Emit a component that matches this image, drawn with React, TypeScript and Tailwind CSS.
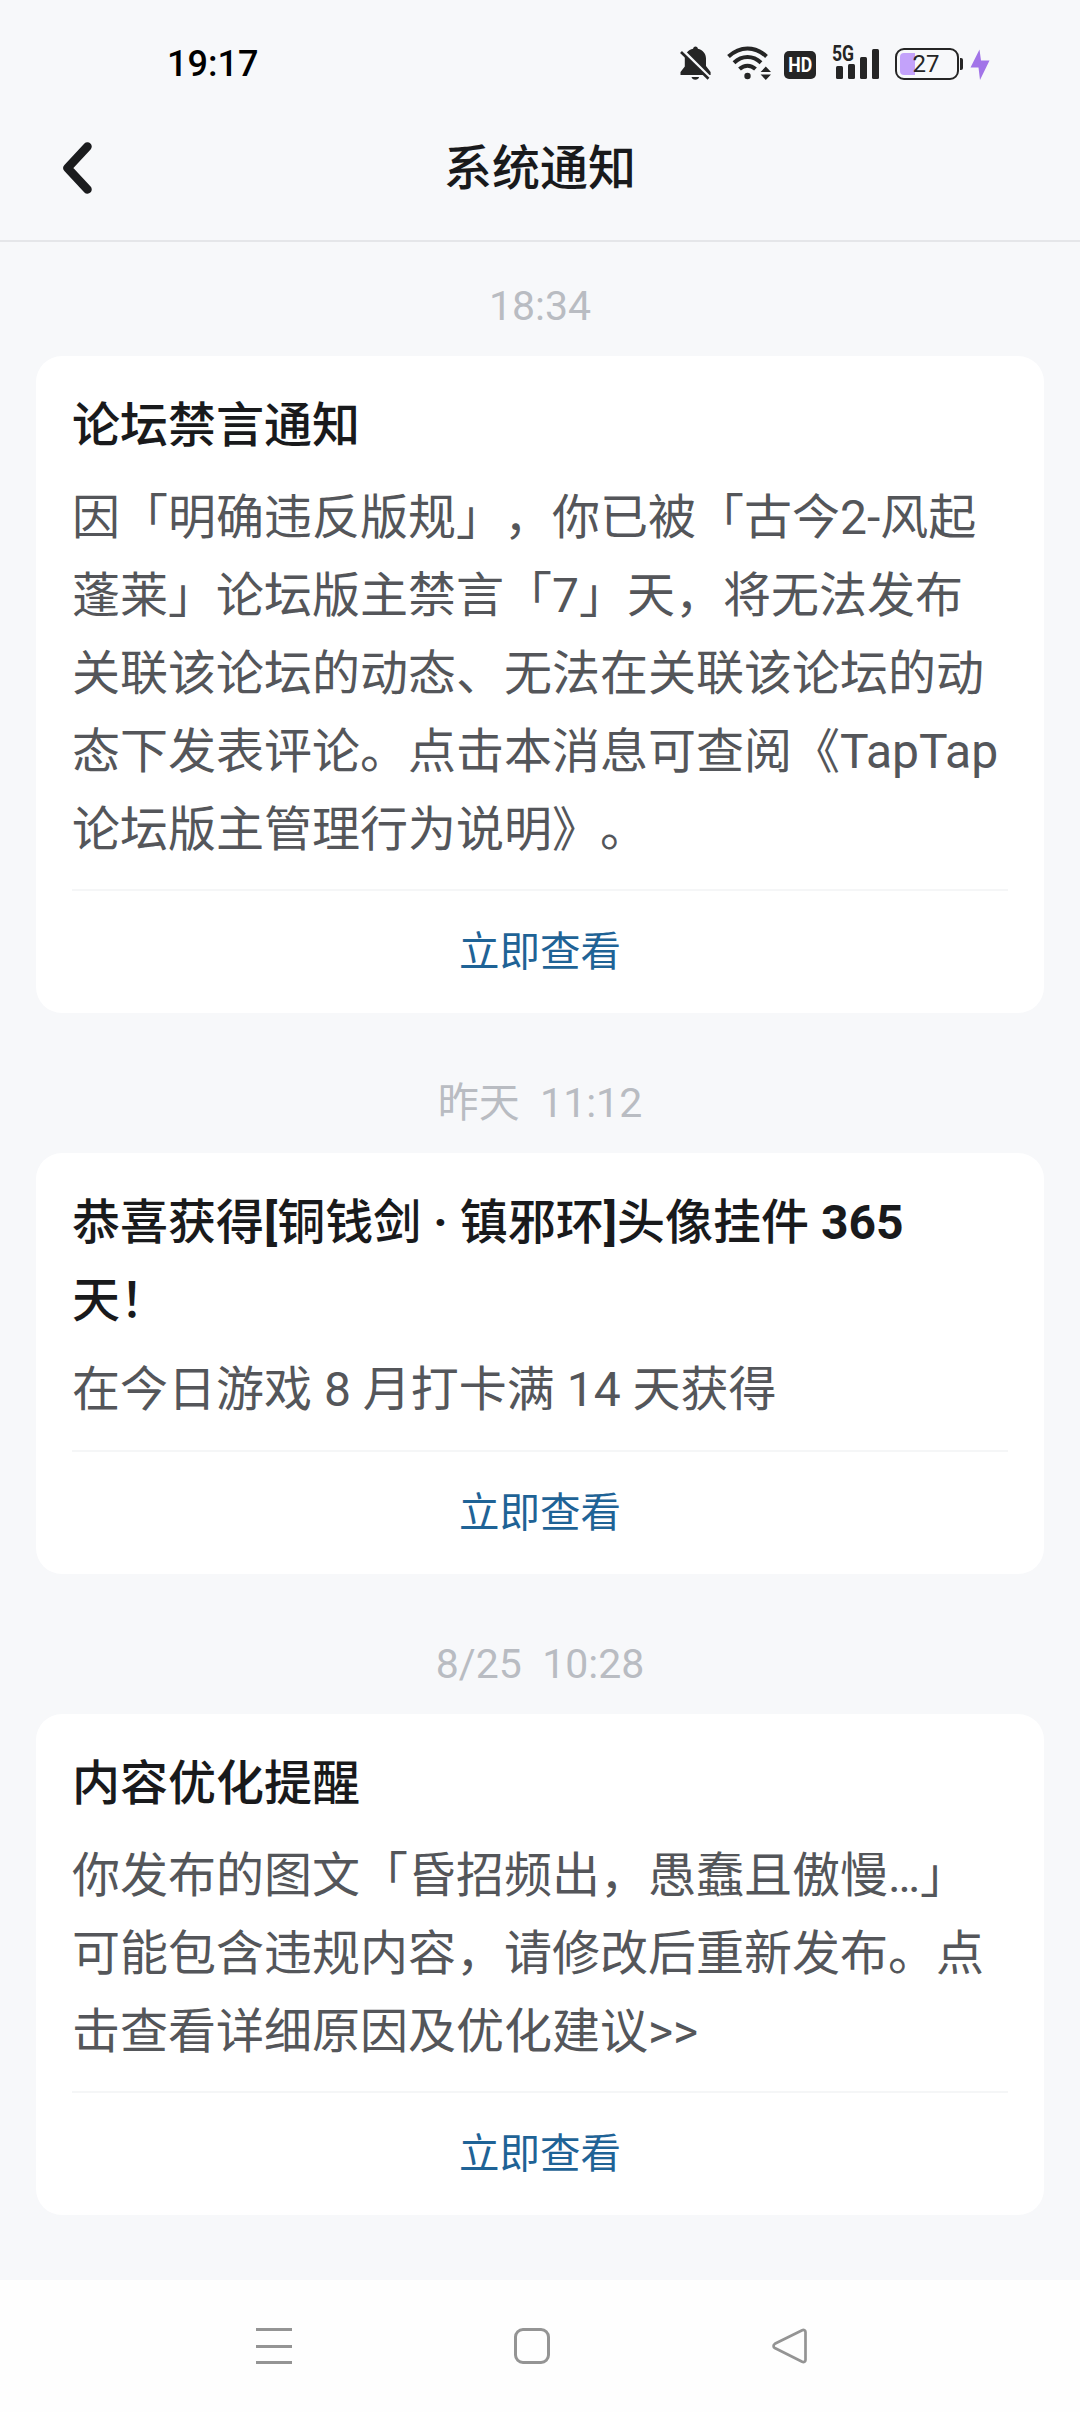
import type { ReactNode } from "react";

function BellOff() {
  return (
    <svg className="h-[34px] w-[31px]" viewBox="0 0 31 34" fill="#252525">
      <path d="M15.5 0.5c1.4 0 2.4 1 2.4 2.3C22.6 3.9 26 7.600 26 12.500v7.500l4.600 6V29H0.500v-3l4.300-5.600V12.500c0-4.900 3.300-8.600 8.300-9.700 0-1.300 1-2.300 2.400-2.300z" />
      <path d="M11.500 31h7.600c-.5 1.700-1.900 2.700-3.800 2.700s-3.300-1-3.800-2.700z" />
      <path d="M2.200 3.800L31 32.600" stroke="#f7f8fa" strokeWidth="3" />
      <path d="M1 6L28.500 32.800" stroke="#252525" strokeWidth="2.600" />
    </svg>
  );
}

function Wifi() {
  return (
    <svg className="h-[34px] w-[44px]" viewBox="0 0 44 34" fill="none">
      <path d="M1.500 10.500C13-0.300 28-0.300 39.500 10.500" stroke="#252525" strokeWidth="4" />
      <path d="M7 16.800c8-7.600 19-7.600 27 0" stroke="#252525" strokeWidth="4" />
      <path d="M12.500 23c4.800-4.500 11.200-4.500 16 0" stroke="#252525" strokeWidth="4" />
      <circle cx="20.500" cy="30" r="3.200" fill="#252525" />
      <path d="M38.800 20.500L44 26H33.600zM38.800 34L44 28.500H33.600z" fill="#252525" />
    </svg>
  );
}

function Signal() {
  return (
    <div className="relative h-[34px] w-[48px]">
      <span className="absolute -top-[1px] left-0 origin-left scale-x-[0.8] text-[22px] leading-[18px] font-bold text-[#252525]">
        5G
      </span>
      <svg className="h-[34px] w-[48px]" viewBox="0 0 48 34" fill="#252525">
        <rect x="4" y="20" width="7" height="13" rx="1.500" />
        <rect x="16" y="18" width="7" height="15" rx="1.500" />
        <rect x="28" y="11" width="7" height="22" rx="1.500" />
        <rect x="40" y="3" width="7" height="30" rx="1.500" />
      </svg>
    </div>
  );
}

function Battery() {
  return (
    <div className="flex items-center">
      <div className="relative flex h-[32px] w-[64px] items-center justify-center rounded-[9px] border-[2.500px] border-[#252525]">
        <div className="absolute top-[3px] left-[3px] h-[22px] w-[15px] rounded-l-[4px] bg-[#c3a2fa]" />
        <span className="relative right-[1px] text-[24px] leading-none text-[#252525]">27</span>
      </div>
      <div className="ml-[1px] h-[12px] w-[3px] rounded-r-[2px] bg-[#252525]" />
    </div>
  );
}

function StatusBar() {
  return (
    <div className="flex h-[95px] items-center pt-[31px] pr-[90px] pl-[167px]">
      <span className="mt-[2px] text-[36px] leading-none font-medium text-black">19:17</span>
      <div className="ml-auto flex items-center">
        <BellOff />
        <div className="ml-4">
          <Wifi />
        </div>
        <div className="mt-[4px] ml-[13px] flex h-[28px] w-[32px] items-center justify-center rounded-[5px] bg-[#252525]">
          <span className="scale-x-[0.84] text-[21px] leading-none font-bold text-white">HD</span>
        </div>
        <div className="ml-4">
          <Signal />
        </div>
        <div className="mt-[2px] ml-[15px]">
          <Battery />
        </div>
        <svg className="mt-[2px] ml-[7px] h-[31px] w-[20px]" viewBox="0 0 20 31" fill="#a274e8">
          <path d="M9.500 0.500L0.500 18.500h8l1.500 12.500L19.500 11.500h-8.500z" />
        </svg>
      </div>
    </div>
  );
}

function Header() {
  return (
    <header className="grid h-[147px] grid-cols-[1fr_auto_1fr] items-center border-b-2 border-[#e5e6e9]">
      <svg className="ml-[62px] h-[52px] w-[31px]" viewBox="0 0 31 52" fill="none">
        <path
          d="M25.500 4.500L5.500 26l20 21.500"
          stroke="#1b1c1e"
          strokeWidth="8.500"
          strokeLinecap="round"
          strokeLinejoin="round"
        />
      </svg>
      <h1 className="pt-[3px] text-[48px] leading-none font-medium text-[#191a1c]">系统通知</h1>
      <div />
    </header>
  );
}

function Bold({ children }: { children: ReactNode }) {
  return <span className="font-bold">{children}</span>;
}

type Notice = {
  time: string;
  title: ReactNode[];
  body: string[];
  compact?: boolean;
};

const notices: Notice[] = [
  {
    time: "18:34",
    title: ["论坛禁言通知"],
    body: [
      "因「明确违反版规」，你已被「古今2-风起",
      "蓬莱」论坛版主禁言「7」天，将无法发布",
      "关联该论坛的动态、无法在关联该论坛的动",
      "态下发表评论。点击本消息可查阅《TapTap",
      "论坛版主管理行为说明》。",
    ],
  },
  {
    time: "昨天  11:12",
    title: [
      <>
        恭喜获得<Bold>[</Bold>铜钱剑<Bold> · </Bold>镇邪环<Bold>]</Bold>头像挂件<Bold> 365</Bold>
      </>,
      "天！",
    ],
    body: ["在今日游戏 8 月打卡满 14 天获得"],
    compact: true,
  },
  {
    time: "8/25  10:28",
    title: ["内容优化提醒"],
    body: [
      "你发布的图文「昏招频出，愚蠢且傲慢…」",
      "可能包含违规内容，请修改后重新发布。点",
      "击查看详细原因及优化建议>>",
    ],
  },
];

function NoticeItem({ notice }: { notice: Notice }) {
  return (
    <section className="px-9">
      <time className="flex h-[62px] items-center justify-center pt-[3px] text-[41px] leading-none whitespace-pre text-[#b9bcc2]">
        {notice.time}
      </time>
      <article className="mt-5 rounded-[26px] bg-white px-9 pt-[31px]">
        <h2 className="text-[48px] leading-[78px] font-medium whitespace-nowrap text-[#191a1c]">
          {notice.title.map((line, i) => (
            <span key={i} className="block h-[78px]">
              {line}
            </span>
          ))}
        </h2>
        <p
          className={`text-[48px] leading-[78px] whitespace-nowrap text-[#54565a] ${
            notice.compact ? "mt-[11px] pb-[21px]" : "mt-[14px] pb-[20px]"
          }`}
        >
          {notice.body.map((line) => (
            <span key={line} className="block h-[78px]">
              {line}
            </span>
          ))}
        </p>
        <button className="flex h-[124px] w-full items-center justify-center border-t-2 border-[#f5f6f7] text-[40.500px] leading-none text-[#1f6396]">
          立即查看
        </button>
      </article>
    </section>
  );
}

function NavBar() {
  return (
    <nav className="flex h-[132px] items-center bg-[#fefefe] pl-[145px]">
      <div className="flex w-[258px] justify-center">
        <div className="flex h-9 w-9 flex-col justify-between">
          <div className="h-[3px] bg-[#949494]" />
          <div className="h-[3px] bg-[#949494]" />
          <div className="h-[3px] bg-[#949494]" />
        </div>
      </div>
      <div className="flex w-[258px] justify-center">
        <div className="h-9 w-9 rounded-[9px] border-[3px] border-[#949494]" />
      </div>
      <div className="flex w-[258px] justify-center">
        <svg className="h-9 w-9" viewBox="0 0 36 36" fill="none">
          <path
            d="M30.200 2.200L2.800 15.800c-1.700 1-1.700 3.200 0 4.200l27.400 13.800c1.600.7 3.300-.2 3.300-1.800V4c0-1.600-1.700-2.500-3.300-1.800z"
            stroke="#949494"
            strokeWidth="2.700"
            strokeLinejoin="round"
          />
        </svg>
      </div>
    </nav>
  );
}

export default function App() {
  return (
    <div
      lang="zh-CN"
      className="flex h-[2412px] w-[1080px] flex-col overflow-hidden bg-[#f7f8fa] font-[Roboto,'Noto_Sans_CJK_SC',sans-serif] [text-spacing-trim:space-all]"
    >
      <StatusBar />
      <Header />
      <main className="flex flex-1 flex-col gap-[58px] pt-[32px]">
        {notices.map((notice) => (
          <NoticeItem key={notice.time} notice={notice} />
        ))}
      </main>
      <NavBar />
    </div>
  );
}
